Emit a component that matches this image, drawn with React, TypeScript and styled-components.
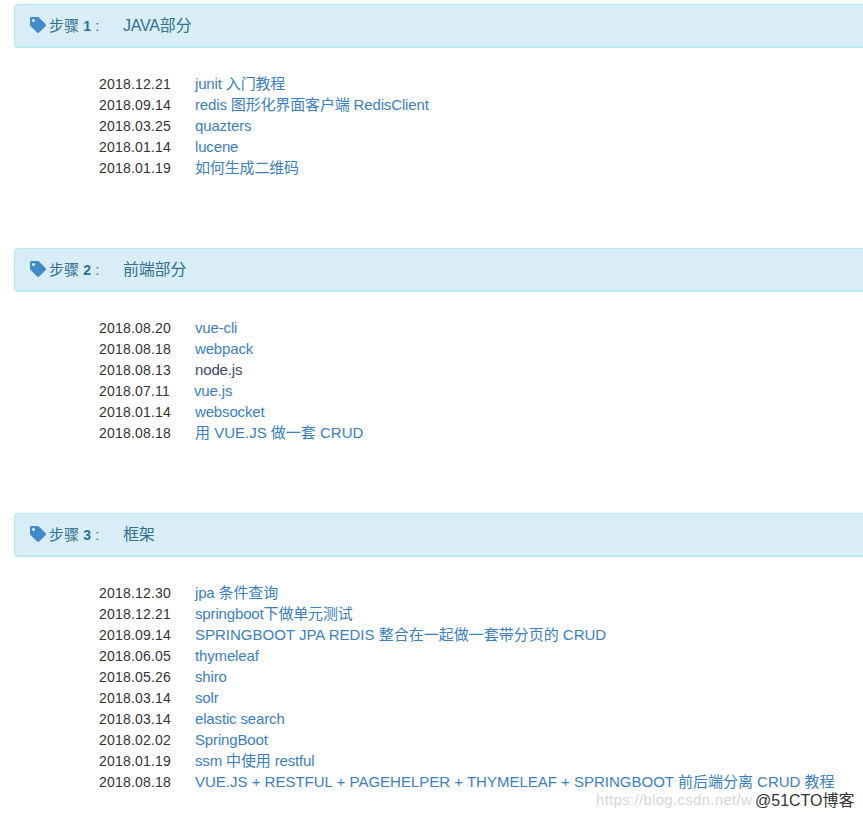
import React from "react";
import styled, { createGlobalStyle } from "styled-components";
import { FaTag } from "react-icons/fa";

const GlobalStyle = createGlobalStyle`
  html, body {
    margin: 0;
    padding: 0;
    background: #fff;
    overflow: hidden;
  }
  body {
    font-family: "Liberation Sans", "Noto Sans CJK SC", sans-serif;
    font-size: 14px;
    color: #333;
  }
`;

const Page = styled.div`
  position: relative;
  width: 863px;
  height: 819px;
  padding-top: 4px;
  box-sizing: border-box;
  overflow: hidden;
`;

const Section = styled.section`
  margin-bottom: 70px;
`;

const StepPanel = styled.div`
  display: flex;
  align-items: center;
  box-sizing: border-box;
  width: 880px;
  height: 44px;
  margin-left: 14px;
  padding: 0 0 3px 15px;
  background: #d9edf7;
  border: 1px solid #bce8f1;
  border-bottom-width: 2px;
  border-radius: 4px;
  color: #31708f;
`;

const TagIcon = styled(FaTag)`
  width: 16px;
  height: 16px;
  margin-right: 3px;
  color: #428bca;
  position: relative;
  top: 1px;
`;

const StepLabel = styled.span`
  font-size: 15px;
  width: 74px;
  flex: none;

  b {
    font-weight: 700;
    font-size: 14px;
  }
`;

const StepTitle = styled.span`
  font-size: 16px;
  letter-spacing: -0.2px;
`;

const Entries = styled.ul`
  list-style: none;
  margin: 25px 0 0;
  padding: 0 0 0 99px;
`;

const Entry = styled.li`
  display: flex;
  height: 21px;
  line-height: 22px;
`;

const EntryDate = styled.span`
  flex: none;
  width: 96px;
  color: #333;
  letter-spacing: 0.2px;
`;

const EntryLink = styled.a<{ $visited?: boolean; $nudge?: boolean; $caps?: boolean }>`
  color: ${(p) => (p.$visited ? "#3a4a66" : "#3a80c0")};
  font-size: 15px;
  letter-spacing: ${(p) => (p.$caps ? "0" : "-0.15px")};
  text-decoration: none;
  white-space: nowrap;
  margin-left: ${(p) => (p.$nudge ? "-1px" : "0")};
`;

const Watermark = styled.div`
  position: absolute;
  left: 596px;
  top: 791px;
  white-space: nowrap;
  font-size: 15px;
  letter-spacing: 0.3px;
  color: rgba(170, 170, 170, 0.5);
`;

const WatermarkBrand = styled.span`
  position: absolute;
  left: 159px;
  top: -4px;
  font-size: 16px;
  letter-spacing: 0;
  color: #333;
  text-shadow: 0 0 2px #fff, 0 0 2px #fff;
`;

type Item = { date: string; title: string; visited?: boolean; nudge?: boolean; caps?: boolean };

const steps: { no: number; title: string; items: Item[] }[] = [
  {
    no: 1,
    title: "JAVA部分",
    items: [
      { date: "2018.12.21", title: "junit 入门教程" },
      { date: "2018.09.14", title: "redis 图形化界面客户端 RedisClient" },
      { date: "2018.03.25", title: "quazters" },
      { date: "2018.01.14", title: "lucene" },
      { date: "2018.01.19", title: "如何生成二维码" },
    ],
  },
  {
    no: 2,
    title: "前端部分",
    items: [
      { date: "2018.08.20", title: "vue-cli" },
      { date: "2018.08.18", title: "webpack" },
      { date: "2018.08.13", title: "node.js", visited: true },
      { date: "2018.07.11", title: "vue.js", nudge: true },
      { date: "2018.01.14", title: "websocket" },
      { date: "2018.08.18", title: "用 VUE.JS 做一套 CRUD", caps: true },
    ],
  },
  {
    no: 3,
    title: "框架",
    items: [
      { date: "2018.12.30", title: "jpa 条件查询" },
      { date: "2018.12.21", title: "springboot下做单元测试" },
      { date: "2018.09.14", title: "SPRINGBOOT JPA REDIS 整合在一起做一套带分页的 CRUD", caps: true },
      { date: "2018.06.05", title: "thymeleaf" },
      { date: "2018.05.26", title: "shiro" },
      { date: "2018.03.14", title: "solr" },
      { date: "2018.03.14", title: "elastic search" },
      { date: "2018.02.02", title: "SpringBoot" },
      { date: "2018.01.19", title: "ssm 中使用 restful" },
      { date: "2018.08.18", title: "VUE.JS + RESTFUL + PAGEHELPER + THYMELEAF + SPRINGBOOT 前后端分离 CRUD 教程", caps: true },
    ],
  },
];

export default function App() {
  return (
    <>
      <GlobalStyle />
      <Page>
        {steps.map((step) => (
          <Section key={step.no}>
            <StepPanel>
              <TagIcon />
              <StepLabel>
                步骤 <b>{step.no}</b> :
              </StepLabel>
              <StepTitle>{step.title}</StepTitle>
            </StepPanel>
            <Entries>
              {step.items.map((item, i) => (
                <Entry key={i}>
                  <EntryDate>{item.date}</EntryDate>
                  <EntryLink href="#" $visited={item.visited} $nudge={item.nudge} $caps={item.caps}>
                    {item.title}
                  </EntryLink>
                </Entry>
              ))}
            </Entries>
          </Section>
        ))}
        <Watermark>
          https://blog.csdn.net/w
          <WatermarkBrand>@51CTO博客</WatermarkBrand>
        </Watermark>
      </Page>
    </>
  );
}
